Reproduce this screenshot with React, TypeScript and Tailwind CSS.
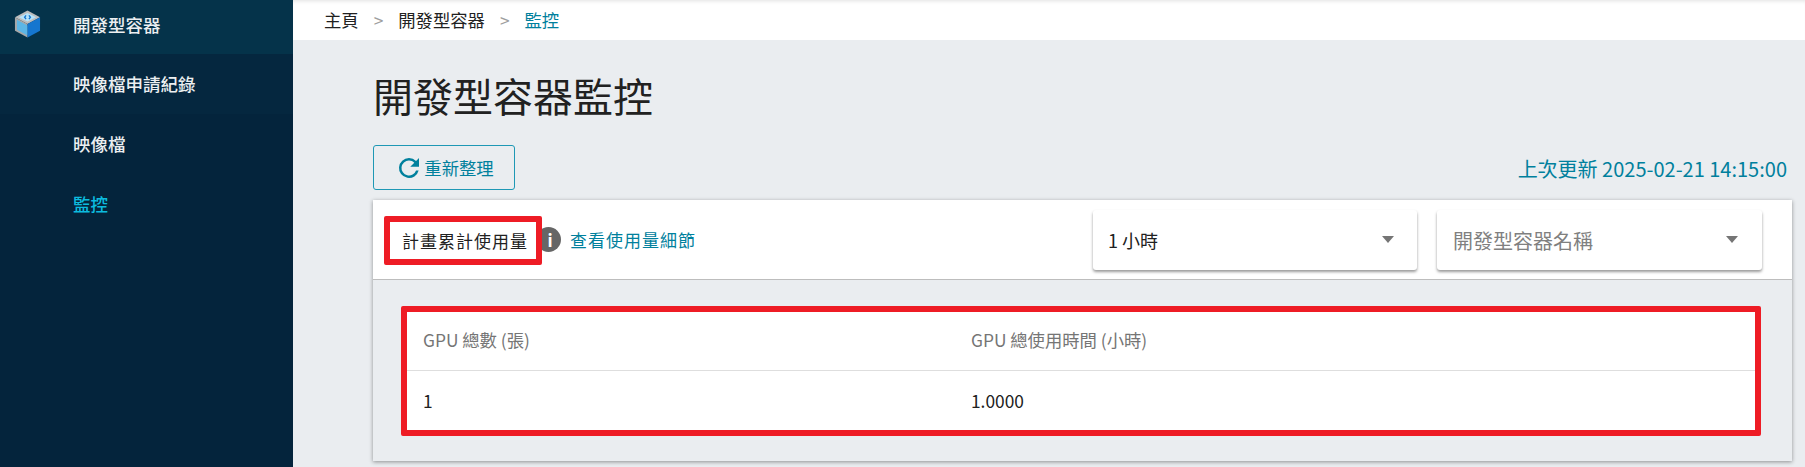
import React from "react";

const font = { fontFamily: '"Noto Sans CJK TC", "Noto Sans", sans-serif' };

function Cube() {
  return (
    <svg width="28" height="30" viewBox="0 0 28 30">
      <polygon points="14,1 27,8 14,15 1,8" fill="#bdbdbd" />
      <polygon points="14,3.5 23,8 14,12.5 5,8" fill="#b5e3fa" />
      <polygon points="1,8 14,15 14,29 1,22" fill="#a8a8a8" />
      <polygon points="3,10.5 14,16.5 14,27 3,21" fill="#5cb6e6" />
      <polygon points="14,15 27,8 27,22 14,29" fill="#1576cf" />
      <path d="M12.5 6 L11 8 L12.5 10 M15.5 6 L17 8 L15.5 10" stroke="#1576cf" strokeWidth="1.4" fill="none" />
    </svg>
  );
}

function Caret() {
  return <span className="h-0 w-0 border-x-[6px] border-t-[7px] border-x-transparent border-t-[#757575]" />;
}

export default function App() {
  return (
    <div style={font} className="flex h-[467px] w-[1805px] overflow-hidden bg-[#eaedf0] text-[#212121]">
      <aside className="flex w-[293px] shrink-0 flex-col bg-[#04243c] text-[17.5px] font-medium text-[#eceff1]">
        <div className="flex h-[54px] items-center bg-[#05334a]">
          <div className="mb-[6px] ml-[14px] mr-[32px] flex w-[27px] justify-center">
            <Cube />
          </div>
          <span className="mt-[-4px]">開發型容器</span>
        </div>
        <div className="flex h-[60px] items-center bg-[#05273f] pl-[73px]">映像檔申請紀錄</div>
        <div className="flex h-[60px] items-center pl-[73px]">映像檔</div>
        <div className="flex h-[60px] items-center pl-[73px] text-[#0cbbdf]">監控</div>
      </aside>

      <main className="flex min-w-0 flex-1 flex-col">
        <nav className="flex h-[40px] items-center gap-[15px] bg-white pl-[31px] text-[17.33px] shadow-[inset_0_4px_4px_-3px_rgba(0,0,0,0.12)]">
          <span>主頁</span>
          <span className="text-[#9e9e9e]">&gt;</span>
          <span>開發型容器</span>
          <span className="text-[#9e9e9e]">&gt;</span>
          <span className="text-[#00809d]">監控</span>
        </nav>

        <div className="flex flex-col pl-[80px] pr-[13px]">
          <h1 className="mt-[29px] text-[40px] font-normal leading-[52px]">開發型容器監控</h1>

          <div className="mt-[24px] flex items-center justify-between pr-[5px]">
            <button className="flex h-[45px] w-[142px] items-center justify-center rounded-[3px] border border-[#1e98b5] text-[17.33px] text-[#00809d]">
              <svg width="30" height="30" viewBox="0 0 24 24" fill="#00809d">
                <path d="M17.65 6.35A7.96 7.96 0 0 0 12 4a8 8 0 1 0 7.73 10h-2.08A6 6 0 1 1 12 6c1.66 0 3.14.69 4.22 1.78L13 11h7V4z" />
              </svg>
              重新整理
            </button>
            <span className="pt-[2px] text-[20px] text-[#00809d]">上次更新 2025-02-21 14:15:00</span>
          </div>

          <section className="mt-[10px] flex flex-col shadow-[0_1px_4px_rgba(0,0,0,0.4)]">
            <div className="flex h-[80px] items-center border-b border-[#bdbdbd] bg-white pl-[11px]">
              <span className="relative z-10 mt-[2px] box-border flex h-[49px] w-[158px] items-center justify-center rounded-[2px] border-[6px] border-[#ee1c25] bg-white pl-[4px] text-[17px] tracking-[1px]">
                計畫累計使用量
              </span>
              <span className="ml-[-6px] flex h-[25px] w-[25px] items-center justify-center rounded-full bg-[#666666] pl-[3px] text-[17px] font-bold text-white">
                i
              </span>
              <span className="ml-[9px] text-[17px] tracking-[1px] text-[#00809d]">查看使用量細節</span>
              <div className="ml-auto mr-[30px] flex items-center gap-[20px]">
                <div className="flex h-[60px] w-[324px] items-center justify-between rounded-[3px] bg-white pl-[15px] pr-[23px] text-[18px] shadow-[0_2px_3px_rgba(0,0,0,0.4)]">
                  <span className="mt-[2px]">1 小時</span>
                  <Caret />
                </div>
                <div className="flex h-[60px] w-[325px] items-center justify-between rounded-[3px] bg-white pl-[16px] pr-[24px] text-[20px] text-[#808080] shadow-[0_2px_3px_rgba(0,0,0,0.4)]">
                  <span className="mt-[2px]">開發型容器名稱</span>
                  <Caret />
                </div>
              </div>
            </div>

            <div className="pb-[25px] pl-[28px] pr-[31px] pt-[26px]">
              <div className="box-border h-[130px] rounded-[2px] border-[6px] border-[#ee1c25] bg-white text-[17.33px]">
                <div className="grid h-[59px] grid-cols-[548px_1fr] items-center border-b border-[#dedede] pb-[3px] pl-[16px] text-[#757575]">
                  <span>GPU 總數 (張)</span>
                  <span>GPU 總使用時間 (小時)</span>
                </div>
                <div className="grid h-[59px] grid-cols-[548px_1fr] items-center pl-[16px] text-[#212121]">
                  <span>1</span>
                  <span>1.0000</span>
                </div>
              </div>
            </div>
          </section>
        </div>
      </main>
    </div>
  );
}
